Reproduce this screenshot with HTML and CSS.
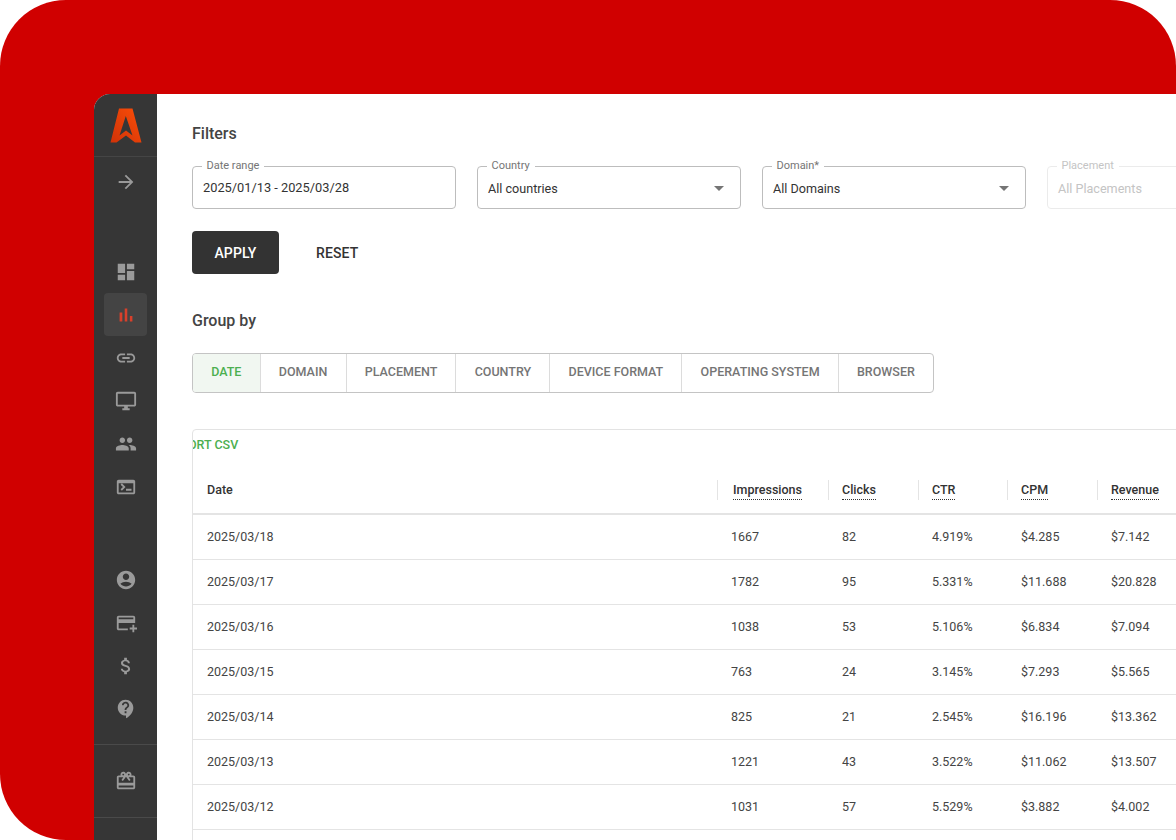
FILE: index.html
```html
<!DOCTYPE html>
<html lang="en">
<head>
<meta charset="utf-8">
<title>Reports</title>
<link rel="stylesheet" href="styles.css">
</head>
<body>
<div class="stage">
  <div class="app">
    <aside class="sidebar">
      <div class="logo">
        <svg width="32" height="35" viewBox="0 0 32 35"><defs><linearGradient id="lg" x1="0" y1="1" x2="1" y2="0"><stop offset="0" stop-color="#cf3208"/><stop offset="1" stop-color="#fb4e08"/></linearGradient></defs><path fill="url(#lg)" fill-rule="evenodd" d="M9 .5h13.500L31.500 34.500h-6.500L16 27.500 6.500 34.500H.5zM15.800 8L9.500 27.500 16 22.500l6.500 5z"/></svg>
      </div>
      <div class="expand">
        <svg class="ic" viewBox="0 0 24 24"><path d="M12 4l-1.410 1.410L16.170 11H4v2h12.170l-5.580 5.590L12 20l8-8z"/></svg>
      </div>
      <nav class="nav nav-main">
        <a class="item"><svg class="ic" viewBox="0 0 24 24"><path d="M3 13h8V3H3v10zm0 8h8v-6H3v6zm10 0h8V11h-8v10zm0-18v6h8V3h-8z"/></svg></a>
        <a class="item active"><svg class="ic" viewBox="0 0 24 24"><path d="M5 9.200h3V19H5zM10.600 5h2.800v14h-2.800zm5.600 8H19v6h-2.800z"/></svg></a>
        <a class="item"><svg class="ic" viewBox="0 0 24 24"><path d="M3.900 12c0-1.710 1.390-3.100 3.100-3.100h4V7H7c-2.760 0-5 2.240-5 5s2.240 5 5 5h4v-1.900H7c-1.710 0-3.100-1.390-3.100-3.100zM8 13h8v-2H8v2zm9-6h-4v1.900h4c1.710 0 3.100 1.390 3.100 3.100s-1.390 3.100-3.100 3.100h-4V17h4c2.760 0 5-2.240 5-5s-2.240-5-5-5z"/></svg></a>
        <a class="item"><svg class="ic" viewBox="0 0 24 24"><path d="M21 2H3c-1.100 0-2 .9-2 2v12c0 1.100.9 2 2 2h7v2H8v2h8v-2h-2v-2h7c1.100 0 2-.9 2-2V4c0-1.100-.9-2-2-2zm0 14H3V4h18v12z"/></svg></a>
        <a class="item"><svg class="ic" viewBox="0 0 24 24"><path d="M16 11c1.660 0 2.990-1.340 2.990-3S17.660 5 16 5c-1.660 0-3 1.340-3 3s1.340 3 3 3zm-8 0c1.660 0 2.990-1.340 2.990-3S9.660 5 8 5C6.340 5 5 6.340 5 8s1.340 3 3 3zm0 2c-2.330 0-7 1.170-7 3.500V19h14v-2.500c0-2.330-4.670-3.500-7-3.500zm8 0c-.29 0-.62.020-.97.050 1.160.84 1.970 1.970 1.970 3.450V19h6v-2.500c0-2.330-4.670-3.500-7-3.500z"/></svg></a>
        <a class="item"><svg class="ic" viewBox="0 0 24 24"><path d="M20 4H4c-1.100 0-2 .9-2 2v12c0 1.100.9 2 2 2h16c1.100 0 2-.9 2-2V6c0-1.100-.9-2-2-2zm0 14H4V8h16v10zM18 16h-6v-2h6v2zM7.500 16l-1.410-1.410L8.670 12 6.090 9.410 7.500 8l4 4-4 4z"/></svg></a>
      </nav>
      <nav class="nav nav-account">
        <a class="item"><svg class="ic" viewBox="0 0 24 24"><path d="M12 2C6.480 2 2 6.480 2 12s4.480 10 10 10 10-4.480 10-10S17.520 2 12 2zm0 3c1.930 0 3.500 1.570 3.500 3.500S13.930 12 12 12s-3.500-1.570-3.500-3.500S10.070 5 12 5zm0 14c-2.030 0-4.430-.82-6.140-2.880C7.550 14.800 9.680 14 12 14s4.450.8 6.140 2.120C16.430 18.180 14.030 19 12 19z"/></svg></a>
        <a class="item"><svg class="ic" viewBox="0 0 24 24"><path d="M20 4H4c-1.110 0-1.990.89-1.990 2L2 18c0 1.110.89 2 2 2h10v-2H4v-6h18V6c0-1.110-.89-2-2-2zm0 4H4V6h16v2zm4 9v2h-3v3h-2v-3h-3v-2h3v-3h2v3h3z"/></svg></a>
        <a class="item"><svg class="ic" viewBox="0 0 24 24"><path d="M11.800 10.900c-2.270-.59-3-1.200-3-2.150 0-1.090 1.010-1.850 2.700-1.850 1.780 0 2.440.85 2.500 2.100h2.210c-.07-1.720-1.120-3.300-3.210-3.810V3h-3v2.160c-1.940.42-3.500 1.680-3.500 3.610 0 2.310 1.910 3.460 4.700 4.130 2.500.6 3 1.480 3 2.410 0 .69-.49 1.790-2.700 1.790-2.060 0-2.870-.92-2.980-2.100h-2.200c.12 2.190 1.760 3.420 3.680 3.830V21h3v-2.150c1.950-.37 3.500-1.500 3.500-3.550 0-2.840-2.430-3.810-4.700-4.400z"/></svg></a>
        <a class="item"><svg class="ic" viewBox="0 0 24 24"><path d="M11.500 2C6.810 2 3 5.810 3 10.500S6.810 19 11.500 19h.5v3c4.860-2.340 8-7 8-11.500C20 5.810 16.190 2 11.500 2zm1 14.500h-2v-2h2v2zm.4-4.780c-.01.01-.02.03-.03.05-.05.08-.1.16-.14.24-.02.03-.03.07-.04.11-.03.07-.06.14-.08.21-.07.21-.1.43-.1.68H10.500c0-.51.08-.94.2-1.300 0-.01 0-.02.01-.03.01-.04.04-.06.05-.1.06-.16.13-.3.22-.44.03-.05.07-.1.1-.15.03-.04.05-.09.08-.12l.01.01c.84-1.100 2.210-1.440 2.320-2.680.09-.98-.61-1.930-1.570-2.130-1.040-.22-1.980.39-2.300 1.280-.14.36-.47.65-.88.65h-.2c-.6 0-1.040-.59-.87-1.170.55-1.820 2.370-3.090 4.430-2.790 1.690.25 3.040 1.640 3.330 3.330.44 2.440-1.630 3.030-2.530 4.350z"/></svg></a>
      </nav>
      <div class="gift">
        <svg class="ic" viewBox="0 0 24 24"><path d="M20 6h-2.180c.11-.31.18-.65.18-1 0-1.660-1.340-3-3-3-1.050 0-1.960.54-2.500 1.350l-.5.670-.5-.68C10.960 2.540 10.050 2 9 2 7.340 2 6 3.340 6 5c0 .35.07.69.18 1H4c-1.110 0-1.990.89-1.990 2L2 19c0 1.110.89 2 2 2h16c1.110 0 2-.89 2-2V8c0-1.110-.89-2-2-2zm-5-2c.55 0 1 .45 1 1s-.45 1-1 1-1-.45-1-1 .45-1 1-1zM9 4c.55 0 1 .45 1 1s-.45 1-1 1-1-.45-1-1 .45-1 1-1zm11 15H4v-2h16v2zm0-5H4V8h5.080L7 10.830 8.620 12 12 7.400l3.380 4.600L17 10.830 14.920 8H20v6z"/></svg>
      </div>
    </aside>
    <main class="content">
      <h2 class="title">Filters</h2>
      <div class="filters">
        <div class="field"><span class="label">Date range</span><span class="value">2025/01/13 - 2025/03/28</span></div>
        <div class="field"><span class="label">Country</span><span class="value select">All countries</span><i class="caret"></i></div>
        <div class="field"><span class="label">Domain*</span><span class="value select">All Domains</span><i class="caret"></i></div>
        <div class="field disabled"><span class="label">Placement</span><span class="value select">All Placements</span></div>
      </div>
      <div class="actions">
        <button class="btn primary">APPLY</button>
        <button class="btn">RESET</button>
      </div>
      <h2 class="title group-title">Group by</h2>
      <div class="tabs">
        <span class="tab on">DATE</span>
        <span class="tab">DOMAIN</span>
        <span class="tab">PLACEMENT</span>
        <span class="tab">COUNTRY</span>
        <span class="tab">DEVICE FORMAT</span>
        <span class="tab">OPERATING SYSTEM</span>
        <span class="tab">BROWSER</span>
      </div>
      <section class="card">
        <div class="toolbar"><span class="export">EXPORT CSV</span></div>
        <table class="grid">
          <colgroup><col class="c1"><col class="c2"><col class="c3"><col class="c4"><col class="c5"><col class="c6"></colgroup>
          <thead>
            <tr><th>Date</th><th class="wide"><span>Impressions</span></th><th><span>Clicks</span></th><th><span>CTR</span></th><th><span>CPM</span></th><th><span>Revenue</span></th></tr>
          </thead>
          <tbody>
            <tr><td>2025/03/18</td><td>1667</td><td>82</td><td>4.919%</td><td>$4.285</td><td>$7.142</td></tr>
            <tr><td>2025/03/17</td><td>1782</td><td>95</td><td>5.331%</td><td>$11.688</td><td>$20.828</td></tr>
            <tr><td>2025/03/16</td><td>1038</td><td>53</td><td>5.106%</td><td>$6.834</td><td>$7.094</td></tr>
            <tr><td>2025/03/15</td><td>763</td><td>24</td><td>3.145%</td><td>$7.293</td><td>$5.565</td></tr>
            <tr><td>2025/03/14</td><td>825</td><td>21</td><td>2.545%</td><td>$16.196</td><td>$13.362</td></tr>
            <tr><td>2025/03/13</td><td>1221</td><td>43</td><td>3.522%</td><td>$11.062</td><td>$13.507</td></tr>
            <tr><td>2025/03/12</td><td>1031</td><td>57</td><td>5.529%</td><td>$3.882</td><td>$4.002</td></tr>
          </tbody>
        </table>
      </section>
    </main>
  </div>
</div>
</body>
</html>
```
FILE: styles.css
```css
* { box-sizing: border-box; }
html, body { margin: 0; padding: 0; background: #fff; }
body { font-family: Roboto, "Liberation Sans", sans-serif; color: #333; }
.stage {
  width: 1176px; height: 840px; overflow: hidden;
  background: #d00000; border-radius: 66px 66px 0 66px;
  padding: 94px 0 0 94px;
}
.app { display: flex; width: 1082px; height: 746px; background: #fff; border-top-left-radius: 16px; overflow: hidden; }
.sidebar { width: 63px; flex: none; background: #363636; display: flex; flex-direction: column; align-items: center; }
.logo { width: 100%; height: 63px; flex: none; display: flex; justify-content: center; align-items: center; border-bottom: 1px solid #454545; }
.ic { width: 22px; height: 22px; fill: #9a9a9a; display: block; }
.expand { height: 50px; flex: none; display: flex; align-items: center; justify-content: center; }
.nav { display: flex; flex-direction: column; gap: 0; }
.item { width: 43px; height: 43px; display: flex; align-items: center; justify-content: center; border-radius: 4px; }
.item.active { background: #444; }
.item.active .ic { fill: #d8402b; }
.nav-main { margin-top: 43px; }
.nav-account { margin-top: 50px; }
.gift { width: 100%; flex: none; height: 74px; margin-top: 14px; border-top: 1px solid #4a4a4a; border-bottom: 1px solid #4a4a4a; display: flex; align-items: center; justify-content: center; }
.content { flex: 1; min-width: 0; padding: 30px 0 0 35px; overflow: hidden; }
.title { margin: 0; font-size: 16px; font-weight: 500; line-height: 19px; color: #444; }
.filters { display: flex; gap: 21px; margin-top: 23px; width: 1200px; }
.field { position: relative; width: 264px; height: 43px; flex: none; border: 1px solid #bdbdbd; border-radius: 4px; display: flex; align-items: center; padding: 0 10px; }
.label { position: absolute; left: 8.500px; top: -8px; padding: 0 5px; background: #fff; font-size: 11px; line-height: 13px; color: #757575; }
.value { font-size: 12.800px; color: #333; }
.value.select { font-size: 12.600px; padding-top: 2px; }
.caret { position: absolute; right: 16px; top: 19px; width: 0; height: 0; border-left: 5px solid transparent; border-right: 5px solid transparent; border-top: 5px solid #757575; }
.field.disabled { border-color: #ebebeb; }
.field.disabled .label, .field.disabled .value { color: #c4c4c4; }
.actions { display: flex; gap: 15px; margin-top: 22px; }
.btn { height: 43px; border: 0; background: none; border-radius: 4px; font: 500 14px Roboto, sans-serif; letter-spacing: .1px; color: #333; padding: 0 22px; }
.btn.primary { background: #333; color: #fff; width: 87px; }
.group-title { margin-top: 37px; }
.tabs { display: inline-flex; margin-top: 23px; height: 40px; border: 1px solid #c4c4c4; border-radius: 4px; overflow: hidden; vertical-align: top; }
.tab { display: flex; align-items: center; padding: 0 18.200px 3px; font-size: 12.500px; font-weight: 500; color: #757575; border-left: 1px solid #dcdcdc; }
.tab:first-child { border-left: 0; }
.tab.on { background: #f1f7f1; color: #4caf50; }
.card { width: 1100px; margin-top: 36px; height: 500px; border: 1px solid #e3e3e3; border-radius: 4px; overflow: hidden; }
.toolbar { height: 36px; display: flex; align-items: center; overflow: hidden; padding-bottom: 7px; }
.export { margin-left: -28px; font-size: 12.500px; font-weight: 500; color: #4caf50; white-space: nowrap; }
.grid { border-collapse: collapse; table-layout: fixed; width: 1004px; font-size: 12.500px; }
.c1 { width: 524px; } .c2 { width: 111px; } .c3 { width: 90px; } .c4 { width: 89px; } .c5 { width: 90px; } .c6 { width: 100px; }
.grid th { height: 48px; text-align: left; font-weight: 500; color: #333; padding: 0 0 0 14px; border-bottom: 2px solid #e4e4e4; position: relative; }
.grid th.wide { padding-left: 16px; }
.grid th span { border-bottom: 1px dotted #333; padding-bottom: 2px; }
.grid th + th::before { content: ""; position: absolute; left: 0; top: 14px; height: 20px; width: 1px; background: #e4e4e4; }
.grid td { height: 45px; padding: 0 0 0 14px; border-bottom: 1px solid #e4e4e4; color: #444; }
```
